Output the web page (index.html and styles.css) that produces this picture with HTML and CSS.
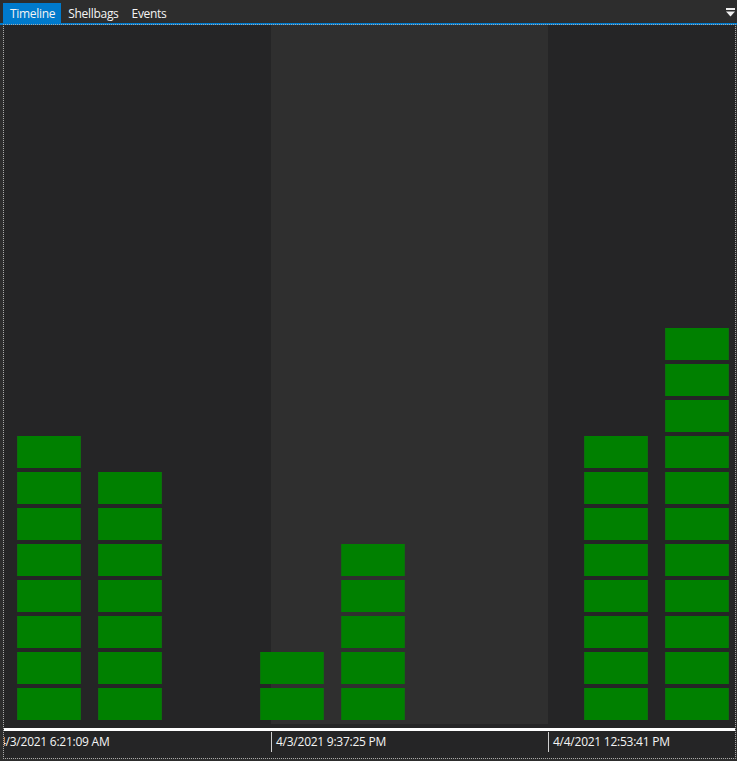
FILE: index.html
```html
<!DOCTYPE html>
<html>
<head>
<meta charset="utf-8">
<link rel="stylesheet" href="styles.css">
</head>
<body>
<div class="tabbar">
  <div class="tabs">
    <div class="tab active">Timeline</div>
    <div class="tab">Shellbags</div>
    <div class="tab">Events</div>
  </div>
  <svg class="menu-icon" width="9" height="9" viewBox="0 0 9 9">
    <rect x="0" y="0" width="9" height="2" fill="#f0f0f0"/>
    <polygon points="0,3.5 9,3.5 4.5,8.5" fill="#f0f0f0"/>
  </svg>
</div>
<div class="frame">
  <div class="plot">
    <div class="col"><div class="blk"></div><div class="blk"></div><div class="blk"></div><div class="blk"></div><div class="blk"></div><div class="blk"></div><div class="blk"></div><div class="blk"></div></div>
    <div class="col"><div class="blk"></div><div class="blk"></div><div class="blk"></div><div class="blk"></div><div class="blk"></div><div class="blk"></div><div class="blk"></div></div>
    <div class="col"></div>
    <div class="col"><div class="blk"></div><div class="blk"></div></div>
    <div class="col"><div class="blk"></div><div class="blk"></div><div class="blk"></div><div class="blk"></div><div class="blk"></div></div>
    <div class="col"></div>
    <div class="col"></div>
    <div class="col"><div class="blk"></div><div class="blk"></div><div class="blk"></div><div class="blk"></div><div class="blk"></div><div class="blk"></div><div class="blk"></div><div class="blk"></div></div>
    <div class="col"><div class="blk"></div><div class="blk"></div><div class="blk"></div><div class="blk"></div><div class="blk"></div><div class="blk"></div><div class="blk"></div><div class="blk"></div><div class="blk"></div><div class="blk"></div><div class="blk"></div></div>
  </div>
  <div class="baseline"></div>
  <div class="axis">
    <div class="tick">4/3/2021 6:21:09 AM</div>
    <div class="tick">4/3/2021 9:37:25 PM</div>
    <div class="tick">4/4/2021 12:53:41 PM</div>
  </div>
</div>
</body>
</html>
```
FILE: styles.css
```css
html, body {
  margin: 0;
  padding: 0;
  background: #2d2d2d;
  font-family: "Open Sans", "Noto Sans", "Liberation Sans", sans-serif;
  font-size: 12px;
  color: #f2f2f2;
  width: 737px;
  height: 761px;
  overflow: hidden;
}

.tabbar {
  display: flex;
  align-items: flex-start;
  justify-content: space-between;
  border-bottom: 2px solid #007acc;
  box-sizing: border-box;
  height: 25px;
}

.tabs {
  display: flex;
  padding-left: 3px;
  padding-top: 3px;
}

.tab {
  height: 20px;
  line-height: 22px;
  padding: 0 6px 0 7px;
  color: #f4f4f4;
  letter-spacing: -0.3px;
}

.tab.active {
  background: #007acc;
}

.menu-icon {
  margin-top: 8px;
  margin-right: 2px;
}

.frame {
  margin-top: -1px;
  margin-left: 3px;
  width: 733px;
  height: 735px;
  box-sizing: border-box;
  border: 1px dotted #a8a8a8;
  background: #252526;
  background-clip: padding-box;
  display: flex;
  flex-direction: column;
}

.plot {
  height: 699px;
  display: flex;
  align-items: flex-end;
  gap: 17px;
  padding: 0 0 4px 13px;
  box-sizing: border-box;
  background: linear-gradient(to right, #252526 0, #252526 267px, #2f2f2f 267px, #2f2f2f 544px, #252526 544px);
}

.col {
  width: 64px;
  display: flex;
  flex-direction: column;
  gap: 4px;
}

.blk {
  height: 32px;
  background: #008000;
  border-left: 1px solid #0d6e0d;
  border-right: 1px solid #0d6e0d;
  box-sizing: border-box;
}

.baseline {
  margin-top: 4px;
  height: 3px;
  background: #ffffff;
}

.axis {
  flex: 1;
  display: flex;
  overflow: hidden;
  padding-top: 1px;
}

.tick {
  flex: 0 0 277px;
  height: 20px;
  box-sizing: border-box;
  border-left: 1px solid #d0d0d0;
  padding-left: 4px;
  line-height: 19px;
  color: #f4f4f4;
  white-space: nowrap;
  letter-spacing: -0.25px;
}

.tick:first-child {
  margin-left: -10px;
}
```
